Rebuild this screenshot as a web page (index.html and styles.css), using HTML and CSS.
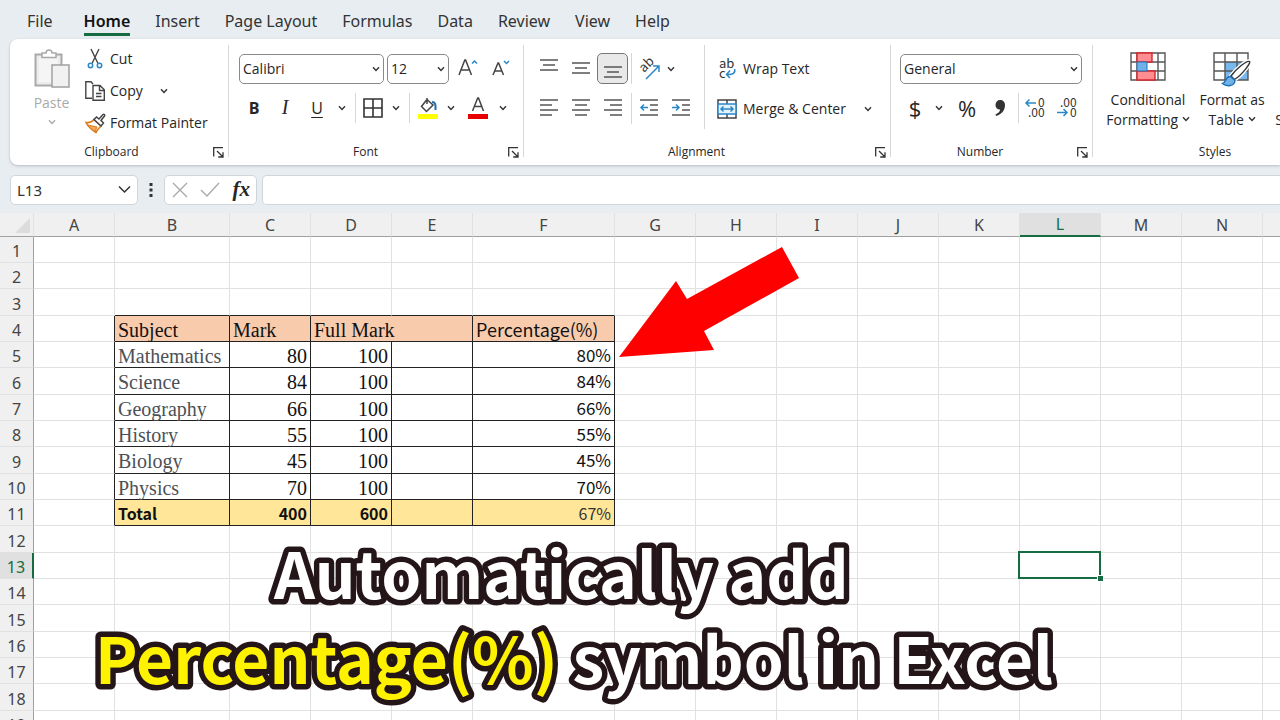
FILE: index.html
```html
<!DOCTYPE html>
<html lang="en">
<head>
<meta charset="utf-8">
<title>Automatically add Percentage(%) symbol in Excel</title>
<link rel="stylesheet" href="styles.css">
</head>
<body>
<svg class="defs" aria-hidden="true">
  <symbol id="chev" viewBox="0 0 8 6"><path d="M1 1.2 4 4.4 7 1.2" fill="none" stroke="currentColor" stroke-width="1.4"/></symbol>
  <symbol id="launch" viewBox="0 0 11 11"><path d="M.7 9.5V.7H10M4 4l6 6M10 5.2V10H5.2" fill="none" stroke="#333" stroke-width="1.3"/></symbol>
</svg>
<div class="app">
  <nav class="tabs">
    <a href="#">File</a><a href="#" class="active">Home</a><a href="#">Insert</a><a href="#">Page Layout</a><a href="#">Formulas</a><a href="#">Data</a><a href="#">Review</a><a href="#">View</a><a href="#">Help</a>
  </nav>

  <div class="ribbon">
    <section class="group clipboard">
      <div class="tools">
        <button class="paste" disabled>
          <svg width="36" height="40" viewBox="0 0 36 40"><path d="M1.5 5.500h26v31h-26z" fill="#ececec" stroke="#a9a9a9" stroke-width="2"/><path d="M5 9h19v24H5z" fill="#f5f5f5"/><path d="M8 8.500V4h4c0-4 6-4 6 0h4v4.500z" fill="#fff" stroke="#a9a9a9" stroke-width="1.500"/><path d="M18 16h17v22H18z" fill="#f1f1f1" stroke="#a0a0a0" stroke-width="1.500"/></svg>
          <span>Paste</span>
          <svg class="chev"><use href="#chev"/></svg>
        </button>
        <div class="stack">
          <button><svg width="20" height="20" viewBox="0 0 20 20" fill="none"><path d="M6 0l7 14.500M14 0L7 14.500" stroke="#444" stroke-width="1.400"/><circle cx="5.500" cy="16.500" r="2.200" stroke="#2b88c8" stroke-width="1.500"/><circle cx="14.500" cy="16.500" r="2.200" stroke="#2b88c8" stroke-width="1.500"/></svg>Cut</button>
          <button><svg width="20" height="20" viewBox="0 0 20 20" fill="none" stroke="#444" stroke-width="1.400"><path d="M7 17.300H.8V.8H6l2 2.200"/><path d="M8 4.500h7l4.300 4.300v10.400H8zM14.500 4.500v5h5M11 12.500h5.500M11 15.500h5.500"/></svg>Copy<svg class="chev gap"><use href="#chev"/></svg></button>
          <button><svg width="20" height="20" viewBox="0 0 20 20" fill="none"><path d="M1 9.500c3 .5 6-.5 8-3l7 6.500c-2 2-4 4-5 6.500C7 17 3 13.500 1 9.500z" fill="#fff" stroke="#dc7d1e" stroke-width="1.600"/><path d="M3 12l9 2-2 4.500C7 17 5 15 3 12z" fill="#f3a55a" stroke="#dc7d1e"/><path d="M9 6.500L11.500 4l2.500 2L18 1.500c1-.8 2.200.5 1.500 1.500L16 7.500l2.500 2.500-2.500 3z" fill="#fff" stroke="#444" stroke-width="1.500"/></svg>Format Painter</button>
        </div>
      </div>
      <footer><span>Clipboard</span><button aria-label="Clipboard options"><svg width="11" height="11"><use href="#launch"/></svg></button></footer>
    </section>

    <section class="group font">
      <div class="tools rows">
        <div class="row">
          <label class="combo family"><select aria-label="Font"><option>Calibri</option></select><svg class="chev"><use href="#chev"/></svg></label>
          <label class="combo size"><select aria-label="Font size"><option>12</option></select><svg class="chev"><use href="#chev"/></svg></label>
          <button class="grow" aria-label="Increase font size"><svg width="20" height="20" viewBox="0 0 20 20" fill="none"><path d="M1 16L6.800 1h.8L13.500 16M3 11h8.500" stroke="#444" stroke-width="1.500"/><path d="M14 4.500l2.500-2.500 2.500 2.500" stroke="#2b88c8" stroke-width="1.500"/></svg></button>
          <button class="shrink" aria-label="Decrease font size"><svg width="20" height="20" viewBox="0 0 20 20" fill="none"><path d="M2 16L7 4h.6L12.500 16M3.800 12h7" stroke="#444" stroke-width="1.500"/><path d="M13 2l2.500 2.500L18 2" stroke="#2b88c8" stroke-width="1.500"/></svg></button>
        </div>
        <div class="row marks">
          <button class="b">B</button><button class="i">I</button><button class="u">U</button>
          <button aria-label="Underline styles"><svg class="chev"><use href="#chev"/></svg></button>
          <i class="sep"></i>
          <button aria-label="Borders"><svg width="20" height="20" viewBox="0 0 20 20"><path d="M1 1h18v18H1zM10 1v18M1 10h18" fill="none" stroke="#333" stroke-width="1.600"/></svg></button>
          <button aria-label="Border styles"><svg class="chev"><use href="#chev"/></svg></button>
          <i class="sep"></i>
          <button aria-label="Fill colour"><svg width="20" height="22" viewBox="0 0 20 22"><path d="M9 1v6M8.500 3L3.500 9.500l5 5L15 8 9 2.500" fill="none" stroke="#444" stroke-width="1.500"/><path d="M14 5c3 0 4 2 3.500 8" fill="none" stroke="#1f6fb5" stroke-width="2"/><path d="M0 17h20v5H0z" fill="#ff0"/></svg></button>
          <button aria-label="Fill colours"><svg class="chev"><use href="#chev"/></svg></button>
          <button aria-label="Font colour"><svg width="20" height="22" viewBox="0 0 20 22"><path d="M4.500 14L9.700 1h.8L15.500 14M6.500 9.500h7.500" fill="none" stroke="#444" stroke-width="1.500"/><path d="M0 17h20v5H0z" fill="#e80000"/></svg></button>
          <button aria-label="Font colours"><svg class="chev"><use href="#chev"/></svg></button>
        </div>
      </div>
      <footer><span>Font</span><button aria-label="Font options"><svg width="11" height="11"><use href="#launch"/></svg></button></footer>
    </section>

    <section class="group alignment">
      <div class="tools split">
        <div class="aligns">
          <button aria-label="Top align"><svg class="al"><path d="M0 1h18M3 6h12M0 11h18"/></svg></button>
          <button aria-label="Middle align"><svg class="al"><path d="M0 4h18M3 9h12M0 14h18"/></svg></button>
          <button class="on" aria-label="Bottom align"><svg class="al"><path d="M0 8h18M3 13h12M0 18h18"/></svg></button>
          <button class="ruled" aria-label="Orientation"><svg width="24" height="24" viewBox="0 0 24 24"><text x="0" y="0" transform="translate(7 16) rotate(-45)" class="glyph">ab</text><path d="M9 22L21.500 9.500M16 9h6v6" fill="none" stroke="#2b88c8" stroke-width="1.500"/></svg></button>
          <button class="near" aria-label="Orientation menu"><svg class="chev"><use href="#chev"/></svg></button>
          <button aria-label="Align left"><svg class="al"><path d="M0 1h18M0 6h12M0 11h18M0 16h12"/></svg></button>
          <button aria-label="Center"><svg class="al"><path d="M0 1h18M3 6h12M0 11h18M3 16h12"/></svg></button>
          <button aria-label="Align right"><svg class="al"><path d="M0 1h18M6 6h12M0 11h18M6 16h12"/></svg></button>
          <button class="ruled" aria-label="Decrease indent"><svg class="al"><path d="M0 1h18M10 6h8M10 11h8M0 16h18"/><path class="blue" d="M8 8.500H1M4 5.500l-3 3 3 3"/></svg></button>
          <button aria-label="Increase indent"><svg class="al"><path d="M0 1h18M10 6h8M10 11h8M0 16h18"/><path class="blue" d="M0 8.500h7M4 5.500l3 3-3 3"/></svg></button>
        </div>
        <div class="wraps">
          <button><svg width="20" height="22" viewBox="0 0 20 22"><text x="2" y="10" class="glyph">ab</text><text x="2" y="20" class="glyph">c</text><path d="M17.500 11c1.500 4-2 6-7.500 5.500M13 12.500l-3.500 4 3.500 3.500" fill="none" stroke="#2b88c8" stroke-width="1.500"/></svg>Wrap Text</button>
          <button><svg width="20" height="20" viewBox="0 0 20 20" fill="none"><path d="M1 1h18v18H1zM10 1v4M10 15v4" stroke="#444" stroke-width="1.500"/><path d="M1 5h18v10H1z" fill="#e4f2fc" stroke="#2b88c8" stroke-width="1.500"/><path d="M4 10h12M6.500 7.500L4 10l2.500 2.500M13.500 7.500L16 10l-2.500 2.500" stroke="#2b88c8" stroke-width="1.500"/></svg>Merge &amp; Center<svg class="chev gap"><use href="#chev"/></svg></button>
        </div>
      </div>
      <footer><span>Alignment</span><button aria-label="Alignment options"><svg width="11" height="11"><use href="#launch"/></svg></button></footer>
    </section>

    <section class="group number">
      <div class="tools rows">
        <div class="row"><label class="combo format"><select aria-label="Number format"><option>General</option></select><svg class="chev"><use href="#chev"/></svg></label></div>
        <div class="row nums">
          <button class="sym">$</button><button aria-label="Currency menu"><svg class="chev"><use href="#chev"/></svg></button>
          <button class="sym">%</button>
          <button aria-label="Comma style"><svg width="12" height="18" viewBox="0 0 12 18"><path d="M6 1c3 0 5 2 5 5 0 5-3 9-9 11l-.5-1.500c3-1.500 4.500-3 4.500-5C3 10.500 1.500 8.500 1.500 6c0-3 2-5 4.500-5z" fill="#333"/></svg></button>
          <i class="sep"></i>
          <button aria-label="Increase decimal"><svg width="20" height="22" viewBox="0 0 20 22"><text x="13" y="10" class="digit">0</text><text x="3" y="20" class="digit">.00</text><path d="M11 6H1M4.500 2.500L1 6l3.500 3.500" fill="none" stroke="#2b88c8" stroke-width="1.500"/></svg></button>
          <button aria-label="Decrease decimal"><svg width="20" height="22" viewBox="0 0 20 22"><text x="3" y="10" class="digit">.00</text><text x="13" y="20" class="digit">0</text><path d="M0 15.500h10M6.500 12l3.500 3.500L6.500 19" fill="none" stroke="#2b88c8" stroke-width="1.500"/></svg></button>
        </div>
      </div>
      <footer><span>Number</span><button aria-label="Number options"><svg width="11" height="11"><use href="#launch"/></svg></button></footer>
    </section>

    <section class="group styles">
      <div class="tools big">
        <button>
          <svg width="36" height="30" viewBox="0 0 36 30"><path d="M1 1h34v27H1zM1 10h34M1 19h34M7 1v27M28 1v27" fill="#fff" stroke="#555" stroke-width="1.400"/><path d="M7 1h15v9H7zM7 19h18v9H7z" fill="#ff8d92" stroke="#d8262c" stroke-width="1.400"/><path d="M7 10h10v9H7z" fill="#6fb2ea" stroke="#2472b8"/></svg>
          <span>Conditional<br>Formatting <svg class="chev"><use href="#chev"/></svg></span>
        </button>
        <button>
          <svg width="40" height="36" viewBox="0 0 40 36"><path d="M2 1h34v27H2z" fill="#fff"/><path d="M13 10h23v18H13z" fill="#79b8ee"/><path d="M2 1h34v27H2zM2 10h34M2 19h34M13 1v27M25 1v27" fill="none" stroke="#555" stroke-width="1.400"/><path d="M37.500 9.500c2 1-8 14-15 18l-3.500-3.500c5-7 16-16 18.500-14.500z" fill="#fff" stroke="#fff" stroke-width="4"/><path d="M37.500 9.500c2 1-8 14-15 18l-3.500-3.500c5-7 16-16 18.500-14.500z" fill="#fff" stroke="#333" stroke-width="1.400"/><path d="M18.500 24.500c-5-1-4 6-8 7 4 3.500 12 3 12.500-3z" fill="#6fb2ea" stroke="#1f6fb5" stroke-width="1.400"/></svg>
          <span>Format as<br>Table <svg class="chev"><use href="#chev"/></svg></span>
        </button>
        <button class="cut"><span>Cell<br>Styles <svg class="chev"><use href="#chev"/></svg></span></button>
      </div>
      <footer><span>Styles</span></footer>
    </section>
  </div>

  <div class="formula-bar">
    <label class="namebox"><input aria-label="Name box" value="L13"><svg width="13" height="9" viewBox="0 0 13 9"><path d="M1 1.500l5.500 5.500L12 1.500" fill="none" stroke="#333" stroke-width="1.500"/></svg></label>
    <svg width="4" height="14" viewBox="0 0 4 14" class="dots"><path d="M.5 0h3v3h-3zM.5 5.500h3v3h-3zM.5 11h3v3h-3z" fill="#333"/></svg>
    <div class="fx">
      <button aria-label="Cancel"><svg width="16" height="16" viewBox="0 0 16 16"><path d="M1 1l14 14M15 1L1 15" stroke="#aaa" stroke-width="1.400"/></svg></button>
      <button aria-label="Enter"><svg width="20" height="16" viewBox="0 0 20 16"><path d="M1 8l6 6L19 1" fill="none" stroke="#aaa" stroke-width="1.400"/></svg></button>
      <button class="fn">fx</button>
    </div>
    <input class="formula" aria-label="Formula">
  </div>

  <main class="sheet">
    <table>
      <colgroup><col class="c-head"><col><col class="c-b"><col><col><col><col class="c-f"><col><col><col><col><col><col><col><col><col></colgroup>
      <thead><tr><th class="corner"><svg width="15" height="15" viewBox="0 0 15 15"><path d="M15 0v15H0z" fill="#dcdcdc"/></svg></th><th>A</th><th>B</th><th>C</th><th>D</th><th>E</th><th>F</th><th>G</th><th>H</th><th>I</th><th>J</th><th>K</th><th class="sel">L</th><th>M</th><th>N</th><th></th></tr></thead>
      <tbody id="cells"></tbody>
    </table>
    <svg class="arrow" width="182" height="114" viewBox="0 0 182 114"><path d="M0 110L57 34l11 18 95-52 17 31-95 53 10 19z" fill="#fe0000"/></svg>
    <h1 class="title"><svg width="1064" height="507" viewBox="0 0 1064 507"><text x="274" y="386">Automatically add</text><text x="95" y="471"><tspan class="hot">Percentage(%)</tspan> symbol in Excel</text></svg></h1>
  </main>
</div>
<script src="sheet.js"></script>
</body>
</html>
```
FILE: styles.css
```css
* { box-sizing: border-box; }
body { margin: 0; font: 15px/20px "Open Sans", "Noto Sans", sans-serif; color: #262626; background: #e8edf1; }
button { border: 0; padding: 0; background: none; font: inherit; color: inherit; display: flex; align-items: center; justify-content: center; white-space: nowrap; }
svg { flex: none; overflow: visible; }
.defs { display: none; }
.app { height: 100vh; display: flex; flex-direction: column; overflow: hidden; }
.chev { width: 8px; height: 6px; color: #333; }

.tabs { display: flex; gap: 25px; padding: 9px 27px 0; height: 39px; font: 16px/24px "Noto Sans", sans-serif; }
.tabs a { color: #333; text-decoration: none; height: 27px; white-space: nowrap; }
.tabs .active { margin-left: 6px; font-weight: 600; color: #111; border-bottom: 3px solid #156c40; }

.ribbon { display: flex; height: 126px; margin-left: 10px; background: #fff; border-radius: 8px 0 0 8px; box-shadow: 0 1px 3px #b4bcc4; overflow: hidden; font-size: 14px; }
.group { flex: none; display: flex; flex-direction: column; padding-top: 6px; position: relative; }
.group::after { content: ""; position: absolute; right: 0; top: 6px; bottom: 8px; width: 1px; background: #d6d6d6; }
.tools { height: 98px; }
.group footer { position: relative; text-align: center; font-size: 12px; line-height: 18px; }
.group footer button { position: absolute; right: 5px; top: 4px; }
.clipboard { width: 219px; }
.clipboard footer { padding-right: 16px; }
.font { width: 295px; }
.font footer { padding-right: 22px; }
.alignment { width: 367px; }
.alignment footer { padding-right: 22px; }
.number { width: 202px; }
.number footer { padding-right: 24px; }
.styles { width: 244px; }
.styles::after { display: none; }

.clipboard .tools { display: flex; gap: 14px; padding-left: 22px; }
.paste { flex-direction: column; justify-content: flex-start; gap: 4px; padding-top: 4px; width: 39px; color: #aaa; }
.paste .chev { color: #aaa; margin-top: 2px; }
.stack { display: grid; grid-template-rows: repeat(3, 32px); margin-top: -2px; }
.stack button { justify-content: flex-start; gap: 5px; }
.gap { margin-left: 12px; }

.rows { display: flex; flex-direction: column; gap: 8px; padding: 8px 0 0 10px; }
.row { display: flex; align-items: center; height: 31px; }
.combo { display: flex; align-items: center; height: 30px; border: 1px solid #8a8a8a; border-radius: 5px; padding-right: 3px; margin-right: 3px; }
.combo select { appearance: none; border: 0; background: none; font: inherit; color: inherit; flex: 1; min-width: 0; padding: 0 0 0 3px; }
.family { width: 145px; }
.size { width: 62px; }
.format { width: 182px; }
.number .rows { padding-left: 9px; }
.grow { margin-left: 6px; }
.shrink { margin-left: 13px; }
.marks { display: grid; grid-template-columns: 30px 32px 32px 18px 8px 28px 18px 8px 30px 16px 38px 12px; }
.nums { display: grid; grid-template-columns: 30px 18px 38px 28px 8px 26px 38px; }
.marks button, .nums button { height: 30px; }
.sep { width: 1px; height: 30px; background: #d6d6d6; justify-self: center; }
.b { font-weight: 700; font-size: 16px; }
.i { font: italic 20px "Liberation Serif", serif; }
.u { font-size: 16px; text-decoration: underline; text-underline-offset: 3px; }
.sym { font-size: 22px; }
.glyph { font: 13px "Noto Sans CJK SC", sans-serif; fill: #333; }
.digit { font: 12px "Noto Sans CJK SC", sans-serif; fill: #333; }

.split { display: flex; }
.aligns { display: grid; grid-template-columns: repeat(3, 32px) 36px 32px; grid-template-rows: 31px 31px; row-gap: 9px; padding: 8px 0 0 9px; border-right: 1px solid #d6d6d6; height: 84px; width: 181px; }
.al { width: 18px; height: 19px; fill: none; stroke: #555; stroke-width: 1.5; }
.al .blue { stroke: #2b88c8; }
.on { background: #e9e9e9; border: 1px solid #777; border-radius: 5px; margin-right: 1px; }
.ruled { border-left: 1px solid #d6d6d6; margin-left: 2px; }
.near { justify-content: flex-start; padding-left: 2px; }
.wraps { display: grid; grid-template-rows: 31px 31px; row-gap: 9px; padding: 8px 0 0 12px; }
.wraps button { justify-content: flex-start; gap: 6px; }

.big { display: grid; grid-template-columns: 86px 66px 54px; gap: 8px; padding: 7px 0 0 12px; }
.big .chev { vertical-align: 3px; }
.big button { flex-direction: column; justify-content: flex-start; gap: 8px; }
.big button + button { gap: 2px; }
.big button.cut { padding-top: 38px; }

.formula-bar { display: flex; align-items: center; gap: 5px; height: 48px; padding: 1px 0 0 10px; }
.namebox, .fx, .formula { height: 30px; background: #fff; border: 1px solid #d0d5da; border-radius: 5px; }
.namebox { display: flex; align-items: center; width: 128px; padding: 0 6px; }
.namebox input { flex: 1; min-width: 0; border: 0; padding: 0; background: none; font: 15px "Noto Sans", sans-serif; color: #333; }
.dots { margin: 0 6px; }
.fx { display: flex; align-items: center; justify-content: space-between; width: 93px; padding: 0 6px 0 7px; }
.fn { font: italic 700 21px "Liberation Serif", serif; }
.formula { flex: 1; min-width: 0; border-right: 0; border-radius: 5px 0 0 5px; }

.sheet { flex: 1; position: relative; overflow: hidden; background: #fff; }
table { table-layout: fixed; width: 1344px; border-collapse: separate; border-spacing: 0; }
col { width: 81px; }
.c-head { width: 34px; }
.c-b { width: 115px; }
.c-f { width: 142px; }
th, td { padding: 0; border: 0 solid #e1e1e1; border-width: 0 1px 1px 0; white-space: nowrap; }
tbody tr { height: 26px; }
tbody tr:nth-child(3n) { height: 27px; }
thead tr { height: 24px; }
th { font: 16px/20px "Noto Sans", sans-serif; color: #444; background: #f0f0f0; }
tbody th { padding-top: 3px; }
thead th { border-bottom-color: #a0a0a0; }
tbody th { border-right-color: #a0a0a0; }
thead .sel { background: #e0e0e0; color: #156c40; border-bottom: 2px solid #156c40; }
tbody .sel { background: #e0e0e0; color: #156c40; border-right: 2px solid #156c40; }
.corner { vertical-align: bottom; }
.corner svg { display: block; margin: 0 3px 3px auto; }
td { font: 20px/22px "Liberation Serif", serif; padding: 2px 3px 0; color: #111; }
.box { border-color: #222; }
.edge-r { border-right-color: #222; }
.edge-b { border-bottom-color: #222; }
.head { background: #f8cbad; }
.total { background: #ffe699; }
.name { color: #4d5156; }
.num { text-align: right; }
.sans { font-family: "Noto Sans CJK SC", sans-serif; font-size: 18px; line-height: 20px; padding-top: 0; }
.sans.num { font-size: 17px; }
.sans.total { font-size: 16px; }
.bold { font-weight: 700; }
.light { color: #333; }
.cursor { position: relative; }
.cursor::before { content: ""; position: absolute; inset: -2px -1px -1px -2px; border: 2px solid #156c40; }
.cursor::after { content: ""; position: absolute; right: -3px; bottom: -3px; width: 5px; height: 5px; background: #156c40; outline: 1px solid #fff; }
.arrow { position: absolute; left: 619px; top: 34px; }
.title { position: absolute; left: 0; top: 0; margin: 0; }
.title svg { display: block; }
.title text { font: 700 64px "Noto Sans CJK SC", "Open Sans", sans-serif; fill: #fff; stroke: #231518; stroke-width: 11px; stroke-linejoin: round; paint-order: stroke; }
.title .hot { fill: #fff200; }
```
FILE: sheet.js
```js
const data = {
  4: ["Subject", "Mark", "Full Mark", "", "Percentage(%)"],
  5: ["Mathematics", 80, 100, "", "80%"],
  6: ["Science", 84, 100, "", "84%"],
  7: ["Geography", 66, 100, "", "66%"],
  8: ["History", 55, 100, "", "55%"],
  9: ["Biology", 45, 100, "", "45%"],
  10: ["Physics", 70, 100, "", "70%"],
  11: ["Total", 400, 600, "", "67%"]
};
const body = document.getElementById("cells");
for (let r = 1; r <= 19; r++) {
  const tr = body.insertRow();
  const th = document.createElement("th");
  th.textContent = r;
  if (r === 13) th.className = "sel";
  tr.append(th);
  for (let c = 1; c <= 15; c++) {
    // "Full Mark" runs across columns D and E
    if (r === 4 && c === 5) continue;
    const td = tr.insertCell();
    const row = data[r];
    if (r === 4 && c === 4) td.colSpan = 2;
    if (r === 3 && c >= 2 && c <= 6) td.classList.add("edge-b");
    if (row && c === 1) td.classList.add("edge-r");
    if (row && c >= 2 && c <= 6) {
      td.textContent = row[c - 2];
      td.classList.add("box");
      if (r === 4) td.classList.add("head");
      if (r > 4 && r < 11 && c === 2) td.classList.add("name");
      if (r > 4 && c > 2) td.classList.add("num");
      if (c === 6 || r === 11) td.classList.add("sans");
      if (r === 11) td.classList.add("total", c === 6 ? "light" : "bold");
    }
    if (r === 13 && c === 12) td.classList.add("cursor");
  }
}
```
